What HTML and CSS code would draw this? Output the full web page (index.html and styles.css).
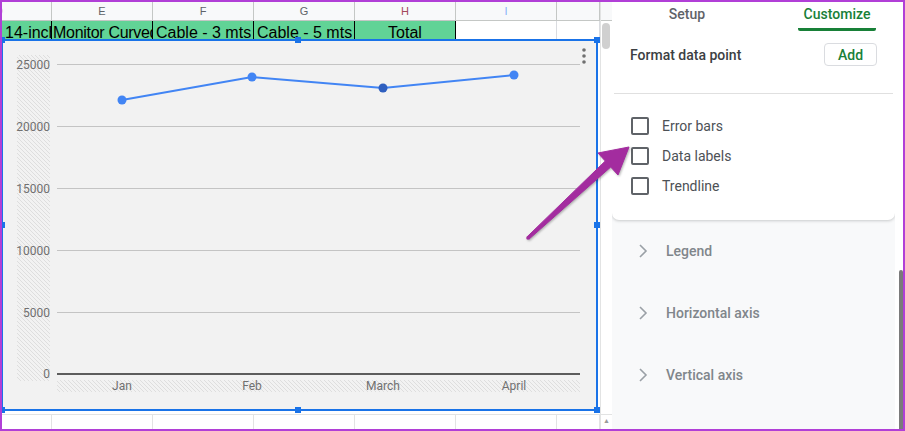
FILE: index.html
```html
<!DOCTYPE html>
<html lang="en">
<head>
    <meta charset="UTF-8">
    <title>Chart editor - Customize</title>
    <link rel="stylesheet" href="styles.css">
</head>
<body>
    <div class="frame">
        <div class="sheet">
            <div class="colheads">
                <div class="ch ch-d">D</div>
                <div class="ch">E</div>
                <div class="ch">F</div>
                <div class="ch">G</div>
                <div class="ch ch-h">H</div>
                <div class="ch ch-i">I</div>
                <div class="ch"></div>
            </div>
            <div class="row1">
                <div class="cell fill">14-inch</div>
                <div class="cell fill tight">Monitor Curved</div>
                <div class="cell fill">Cable - 3 mts</div>
                <div class="cell fill">Cable - 5 mts</div>
                <div class="cell fill center">Total</div>
                <div class="cell"></div>
                <div class="cell"></div>
            </div>
            <div class="chart">
                <svg class="plot" width="593" height="368" viewBox="3 41 593 368">
                    <defs>
                        <pattern id="hatch" width="4" height="4" patternUnits="userSpaceOnUse">
                            <path d="M0,0 L4,4 M-1,3 L1,5 M3,-1 L5,1" stroke="#dedede" stroke-width="1"/>
                        </pattern>
                    </defs>
                    <rect x="17" y="55" width="33" height="326" fill="url(#hatch)"/>
                    <rect x="57" y="380" width="523" height="12" fill="url(#hatch)"/>
                    <g stroke="#c4c4c4" stroke-width="1">
                        <line x1="57" y1="64.5" x2="580" y2="64.5"/>
                        <line x1="57" y1="126.5" x2="580" y2="126.5"/>
                        <line x1="57" y1="188.5" x2="580" y2="188.5"/>
                        <line x1="57" y1="250.5" x2="580" y2="250.5"/>
                        <line x1="57" y1="312.5" x2="580" y2="312.5"/>
                    </g>
                    <line x1="57" y1="374" x2="580" y2="374" stroke="#2b2b2b" stroke-width="1.5"/>
                    <g class="ylabels" text-anchor="end">
                        <text x="50" y="68.5">25000</text>
                        <text x="50" y="130.5">20000</text>
                        <text x="50" y="192.5">15000</text>
                        <text x="50" y="254.5">10000</text>
                        <text x="50" y="316.5">5000</text>
                        <text x="50" y="378">0</text>
                    </g>
                    <g class="xlabels" text-anchor="middle">
                        <text x="122" y="390">Jan</text>
                        <text x="252" y="390">Feb</text>
                        <text x="383" y="390">March</text>
                        <text x="514" y="390">April</text>
                    </g>
                    <polyline points="122,100 252,77 383,88 514,75" fill="none" stroke="#4285f4" stroke-width="2"/>
                    <circle cx="122" cy="100" r="4.5" fill="#4285f4"/>
                    <circle cx="252" cy="77" r="4.5" fill="#4285f4"/>
                    <circle cx="383" cy="88" r="4.5" fill="#2f5fbf"/>
                    <circle cx="514" cy="75" r="4.5" fill="#4285f4"/>
                    <g fill="#707070">
                        <circle cx="584" cy="50" r="1.8"/>
                        <circle cx="584" cy="56" r="1.8"/>
                        <circle cx="584" cy="62" r="1.8"/>
                    </g>
                </svg>
                <span class="handle h-tl"></span>
                <span class="handle h-tc"></span>
                <span class="handle h-tr"></span>
                <span class="handle h-ml"></span>
                <span class="handle h-mr"></span>
                <span class="handle h-bl"></span>
                <span class="handle h-bc"></span>
                <span class="handle h-br"></span>
            </div>
            <div class="rows">
                <div></div><div></div><div></div><div></div><div></div><div></div><div></div>
            </div>
        </div>

        <div class="vscroll">
            <div class="vs-head"></div>
            <div class="vs-thumb"></div>
            <div class="vs-foot">&#9650;</div>
        </div>

        <div class="panel">
            <div class="panel-body">
                <div class="card">
                    <div class="tabs">
                        <div class="tab">Setup</div>
                        <div class="tab active">Customize</div>
                    </div>
                    <div class="format">
                        <span>Format data point</span>
                        <button class="add">Add</button>
                    </div>
                    <div class="divider"></div>
                    <ul class="checks">
                        <li><span class="box"></span>Error bars</li>
                        <li><span class="box"></span>Data labels</li>
                        <li><span class="box"></span>Trendline</li>
                    </ul>
                </div>
                <div class="sections">
                    <div class="section"><svg class="chev" width="10" height="14" viewBox="0 0 10 14"><polyline points="2,1 8,7 2,13"/></svg>Legend</div>
                    <div class="section"><svg class="chev" width="10" height="14" viewBox="0 0 10 14"><polyline points="2,1 8,7 2,13"/></svg>Horizontal axis</div>
                    <div class="section"><svg class="chev" width="10" height="14" viewBox="0 0 10 14"><polyline points="2,1 8,7 2,13"/></svg>Vertical axis</div>
                    <div class="section"><svg class="chev" width="10" height="14" viewBox="0 0 10 14"><polyline points="2,1 8,7 2,13"/></svg>Gridlines and ticks</div>
                </div>
            </div>
            <div class="pscroll"><div class="pthumb"></div></div>
        </div>

        <!-- annotation arrow drawn over the screenshot -->
        <svg class="arrow" width="905" height="431" viewBox="0 0 905 431">
            <polygon points="527,236.9 605.3,161 598,153 629,147 618,175 610.7,167 529,239.1" fill="#a32c9f" stroke="#a32c9f" stroke-width="1" stroke-linejoin="round"/>
            <circle cx="528" cy="238" r="1.8" fill="#a32c9f"/>
        </svg>
    </div>
</body>
</html>
```

FILE: styles.css
```css
* {
    box-sizing: border-box;
}

body {
    margin: 0;
    font-family: Roboto, Arial, sans-serif;
}

.frame {
    position: relative;
    display: flex;
    width: 905px;
    height: 431px;
    border: 2px solid #b13fd7;
    background: #fff;
    overflow: hidden;
}

/* spreadsheet */

.sheet {
    flex: none;
    width: 598px;
    font-family: "Liberation Sans", Arial, sans-serif;
}

.colheads,
.row1,
.rows {
    display: grid;
    grid-template-columns: 50px repeat(5, 101px) 1fr;
}

.colheads {
    height: 19px;
    background: #f8f9fa;
    border-bottom: 1px solid #c4c7c5;
}

.ch {
    border-right: 1px solid #c4c7c5;
    font-size: 11px;
    line-height: 18px;
    color: #5f6368;
    text-align: center;
    overflow: hidden;
}

.ch-d {
    text-align: left;
    text-indent: -7px;
    color: #e49a6c;
}

.ch-h {
    color: #a4485a;
}

.ch-i {
    color: #8ab4f8;
}

.row1 {
    height: 18px;
}

.cell {
    height: 18px;
    padding: 3px 0 0 3px;
    border-right: 1px solid #dadce0;
    font-size: 16px;
    line-height: 18px;
    color: #000;
    white-space: nowrap;
    overflow: hidden;
}

.cell.fill {
    background: #61d396;
    border-right-color: #000;
}

.cell.tight {
    padding-left: 1px;
    letter-spacing: -0.3px;
}

.cell.center {
    padding-left: 0;
    text-align: center;
}

.chart {
    position: relative;
    width: 596px;
    height: 372px;
    border: 2px solid #1a73e8;
    border-left-width: 1px;
    background: #f2f2f2;
}

.plot {
    display: block;
}

.ylabels text,
.xlabels text {
    font-family: Roboto, Arial, sans-serif;
    font-size: 12px;
    fill: #707070;
}

.handle {
    position: absolute;
    width: 6px;
    height: 6px;
    background: #1a73e8;
}

.h-tl { left: -4px; top: -4px; }
.h-tc { left: 292px; top: -4px; }
.h-tr { left: 591px; top: -4px; }
.h-ml { left: -4px; top: 181px; }
.h-mr { left: 591px; top: 181px; }
.h-bl { left: -4px; top: 366px; }
.h-bc { left: 292px; top: 366px; }
.h-br { left: 591px; top: 366px; }

.rows {
    height: 20px;
    margin-top: 3px;
    border-top: 1px solid #e2e3e3;
}

.rows div {
    border-right: 1px solid #e2e3e3;
}

/* sheet scrollbar */

.vscroll {
    flex: none;
    display: flex;
    flex-direction: column;
    width: 12px;
    border-left: 1px solid #e2e3e3;
    background: #fff;
}

.vs-head {
    height: 19px;
    background: #f8f9fa;
    border-bottom: 1px solid #c4c7c5;
}

.vs-thumb {
    width: 8px;
    height: 26px;
    margin: 2px 0 0 1px;
    border-radius: 4px;
    background: #d0d0d0;
}

.vs-foot {
    margin-top: auto;
    height: 15px;
    border-top: 1px solid #e2e3e3;
    font-size: 7px;
    line-height: 12px;
    color: #9a9a9a;
    text-align: center;
}

/* chart editor side panel */

.panel {
    flex: 1;
    display: flex;
}

.panel-body {
    flex: 1;
    background: #f8f9fa;
    overflow: hidden;
}

.card {
    height: 218px;
    background: #fff;
    border-radius: 0 0 7px 7px;
    box-shadow: 0 1px 3px rgba(60, 64, 67, 0.25);
}

.tabs {
    display: flex;
    height: 29px;
}

.tab {
    width: 150px;
    height: 29px;
    padding-top: 3px;
    font-size: 14px;
    font-weight: 500;
    line-height: 18px;
    color: #5f6368;
    text-align: center;
}

.tab.active {
    width: 78px;
    margin-left: 36px;
    color: #188038;
    border-bottom: 3px solid #188038;
    border-radius: 2px;
}

.format {
    display: flex;
    align-items: center;
    justify-content: space-between;
    margin-top: 12px;
    padding: 0 18px;
    font-size: 14px;
    font-weight: 500;
    color: #3c4043;
}

.add {
    width: 53px;
    height: 23px;
    padding: 0;
    border: 1px solid #dadce0;
    border-radius: 4px;
    background: #fff;
    font-family: Roboto, Arial, sans-serif;
    font-size: 14px;
    font-weight: 500;
    color: #188038;
}

.divider {
    height: 1px;
    margin: 27px 2px 0;
    background: #e0e0e0;
}

.checks {
    margin: 0;
    padding: 17px 0 0 19px;
    list-style: none;
}

.checks li {
    display: flex;
    align-items: center;
    height: 30px;
    font-size: 14px;
    color: #4d5156;
}

.box {
    width: 18px;
    height: 18px;
    margin-right: 13px;
    border: 2px solid #5f6368;
    border-radius: 2px;
}

.section {
    display: flex;
    align-items: center;
    height: 62px;
    padding-left: 26px;
    font-size: 14px;
    font-weight: 500;
    color: #80868b;
}

.chev {
    margin-right: 18px;
    fill: none;
    stroke: #9aa0a6;
    stroke-width: 1.6;
}

.pscroll {
    flex: none;
    width: 8px;
    background: #fff;
}

.pthumb {
    width: 4px;
    height: 200px;
    margin: 268px 0 0 4px;
    border-radius: 3px 3px 0 0;
    background: #7b7b7b;
}

/* annotation */

.arrow {
    position: absolute;
    left: -2px;
    top: -2px;
    pointer-events: none;
    filter: drop-shadow(1px 1px 1px rgba(0, 0, 0, 0.3));
}
```
